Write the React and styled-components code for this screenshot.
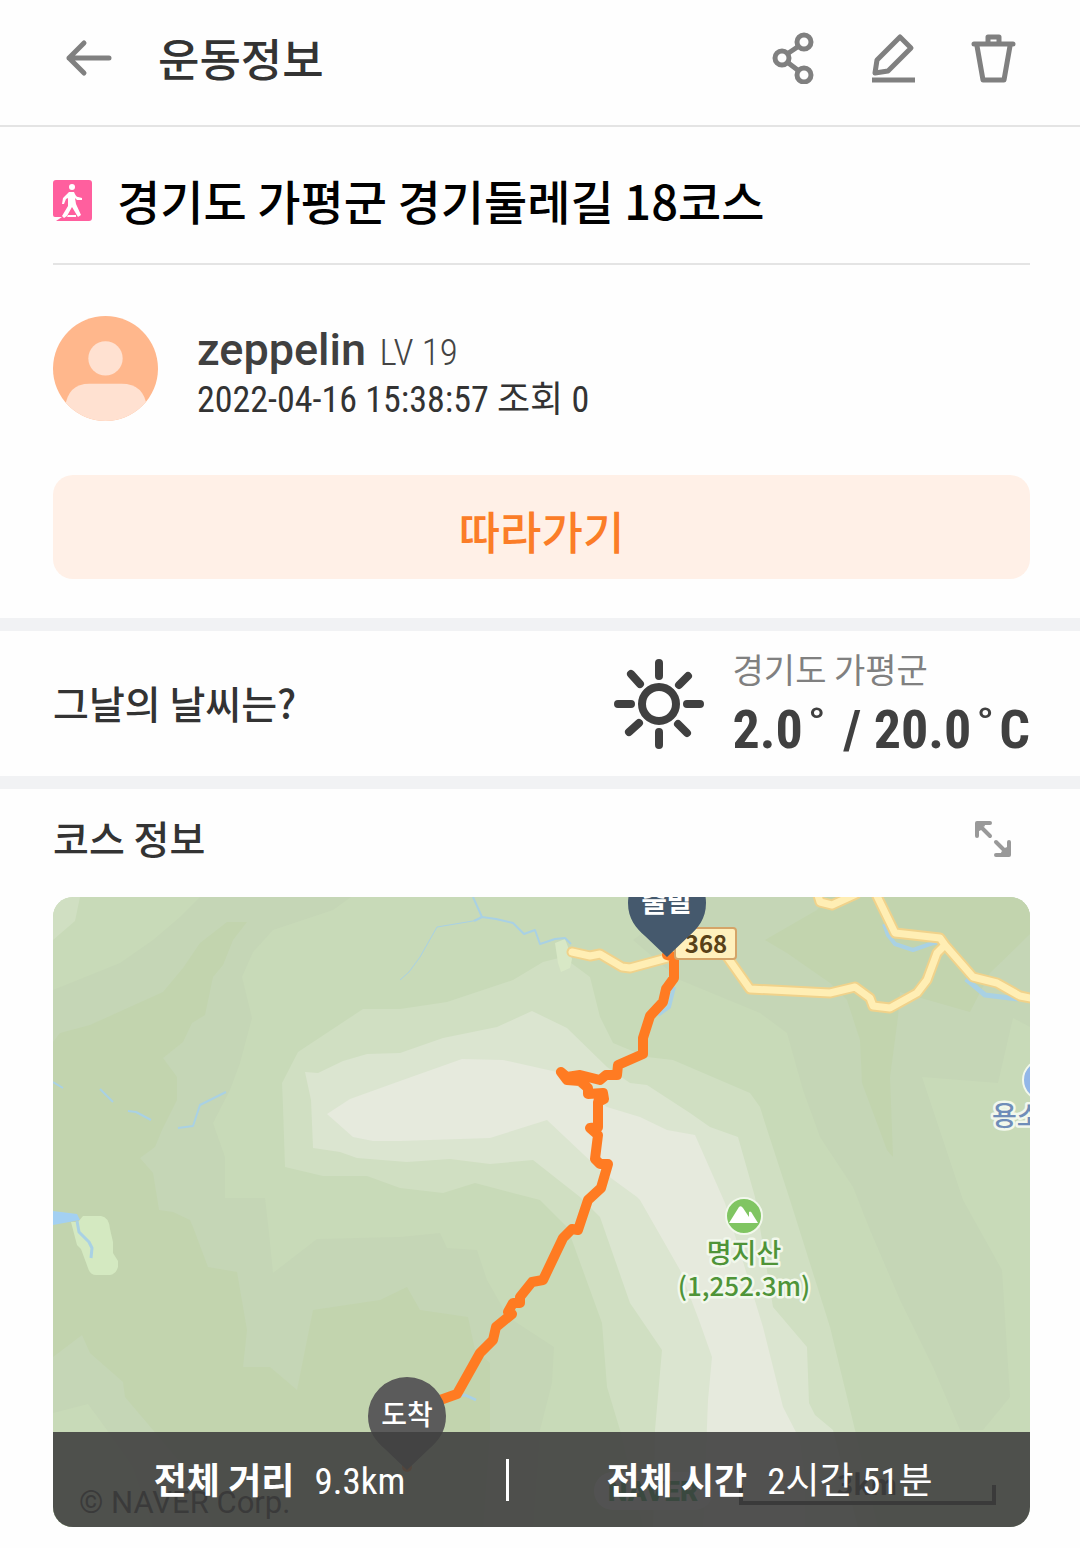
import styled, { createGlobalStyle } from "styled-components";

const GlobalStyle = createGlobalStyle`
  * {
    box-sizing: border-box;
  }

  body {
    margin: 0;
    background: #fefefe;
    color: #333333;
    font-family: "Roboto Condensed", "Liberation Sans Narrow", "Noto Sans CJK KR", sans-serif;
  }

  h1, h2, h3, p, dl, dt, dd {
    margin: 0;
    font-weight: 500;
  }
`;

const Page = styled.div`
  min-height: 100vh;
  padding-bottom: 21px;
`;

const Header = styled.header`
  display: flex;
  align-items: center;
  padding: 32px 60px 41px 64px;
  border-bottom: 2px solid #e4e4e4;
`;

const HeaderTitle = styled.h1`
  flex: 1;
  margin-left: 42px;
  font-family: "Noto Sans CJK KR", sans-serif;
  font-size: 45px;
  line-height: 52px;
`;

const Actions = styled.div`
  display: flex;
  gap: 48px;
`;

const IconButton = styled.button`
  display: flex;
  padding: 0;
  border: none;
  background: none;
  color: ${(props) => props.$color || "#808080"};
  cursor: pointer;
`;

const LineIcon = styled.svg`
  display: block;
  fill: none;
  stroke: currentColor;
  stroke-linejoin: round;
`;

const Summary = styled.section`
  padding: 0 50px 39px 53px;
`;

const TitleRow = styled.div`
  display: flex;
  align-items: center;
  gap: 25px;
  padding: 45px 0 35px;
  border-bottom: 2px solid #e4e4e4;
`;

const CourseTitle = styled.h2`
  color: #000000;
  font-family: "Noto Sans CJK KR", sans-serif;
  font-size: 47px;
  line-height: 56px;
`;

const UserRow = styled.div`
  display: flex;
  align-items: center;
  gap: 39px;
  height: 105px;
  margin: 51px 0 54px;
`;

const UserText = styled.div`
  padding-top: 8px;
`;

const UserName = styled.p`
  font-size: 45px;
  line-height: 52px;
  color: #404040;

  strong {
    font-family: "Roboto", sans-serif;
    font-size: 45px;
    font-weight: 500;
  }

  span {
    margin-left: 3px;
    font-size: 37px;
    font-weight: 300;
    color: #444444;
  }
`;

const UserMeta = styled.p`
  font-size: 36px;
  font-weight: 400;
  line-height: 42px;
`;

const FollowButton = styled.button`
  display: block;
  width: 100%;
  height: 104px;
  padding: 6px 0 0;
  border: none;
  border-radius: 20px;
  background: #fff0e7;
  color: #fb7d28;
  font-family: "Noto Sans CJK KR", sans-serif;
  font-size: 45px;
  font-weight: 500;
  cursor: pointer;
`;

const Weather = styled.section`
  display: flex;
  align-items: center;
  height: 171px;
  padding: 0 50px 0 53px;
  border: solid #f1f2f4;
  border-width: 13px 0;
`;

const SectionTitle = styled.h3`
  flex: 1;
  padding-bottom: 4px;
  font-family: "Noto Sans CJK KR", sans-serif;
  font-size: 39px;
  line-height: 52px;
`;

const Forecast = styled.div`
  display: flex;
  flex-direction: column;
  gap: 4px;
  margin-left: 29px;
  padding-bottom: 2px;
`;

const Place = styled.p`
  font-family: "Noto Sans CJK KR", sans-serif;
  font-size: 34px;
  font-weight: 400;
  line-height: 50px;
  color: #808080;
`;

const Temperature = styled.p`
  font-size: 54px;
  font-weight: 700;
  line-height: 64px;
  color: #404040;
`;

const Degree = styled.span`
  margin: 0 5px;
`;

const CourseHeader = styled.div`
  display: flex;
  align-items: center;
  padding: 22px 68px 30px 53px;
`;

const MapCard = styled.section`
  position: relative;
  margin: 0 50px 0 53px;
  border-radius: 20px;
  overflow: hidden;
`;

const MapDrawing = styled.svg`
  display: block;
  width: 100%;
  font-family: "Noto Sans CJK KR", sans-serif;
`;

const Totals = styled.div`
  position: absolute;
  inset: auto 0 0;
  display: flex;
  align-items: center;
  height: 95px;
  background: rgba(64, 64, 64, 0.9);
  color: #ffffff;
`;

const Total = styled.dl`
  display: flex;
  flex: ${(props) => props.$grow};
  justify-content: center;
  align-items: center;
  gap: 20px;
  padding-top: 4px;
  line-height: 44px;

  dt {
    font-size: 36px;
    font-weight: 700;
  }

  dd {
    font-size: 37px;
    font-weight: 400;
  }
`;

const Divider = styled.span`
  width: 3px;
  height: 42px;
  background: #ffffff;
`;

const contours = [
  // lower slopes
  ["#c5d6b6", "147,0 298,0 280,13 220,33 200,55 189,80 199,121 187,166 177,193 160,226 172,260 172,301 212,301 216,336 220,376 264,342 347,340 387,336 394,351 424,353 434,383 455,420 501,450 499,486 487,533 480,630 0,630 0,93 67,66 100,43 127,20"],
  ["#c2d4ae", "0,145 7,136 37,128 110,95 130,71 147,46 174,25 194,25 180,43 170,68 160,80 152,118 139,126 130,145 110,161 124,180 124,203 109,233 102,250 87,261 100,276 106,313 120,315 137,323 140,330 155,370 184,375 194,433 190,470 217,470 244,493 260,413 327,403 354,390 367,413 415,420 422,453 437,466 437,533 430,630 0,630"],
  ["#c5d6b6", "0,460 29,438 37,456 70,485 72,500 100,533 140,580 160,630 0,630"],
  ["#c8dab8", "0,516 35,507 54,533 80,570 100,630 0,630"],
  ["#d0dfc2", "0,0 27,0 22,24 0,43"],
  ["#c5d6b6", "640,0 580,43 627,83 707,116 734,136 750,193 767,240 800,290 817,333 847,403 880,470 907,533 930,533 957,500 949,373 910,303 869,180 945,186 960,121 977,130 977,0"],
  ["#c2d4ae", "712,43 764,13 774,0 977,0 977,37 937,76 917,115 847,95 845,120 837,180 840,260 834,253 809,186 807,143 794,103 777,86 734,56"],
  // ridge
  ["#d0dfc2", "229,186 245,155 310,112 347,112 394,105 460,83 490,65 510,60 537,80 547,120 560,146 594,160 620,163 697,196 707,210 712,226 737,303 777,430 802,533 825,630 590,630 567,533 554,490 549,426 520,346 514,330 487,303 422,286 390,296 347,291 314,279 270,279 232,270 230,210"],
  ["#dbe5d0", "252,175 265,176 290,164 314,157 347,156 390,141 444,130 479,114 514,131 554,170 577,186 594,188 637,216 657,230 685,240 702,300 720,410 754,450 756,506 762,518 780,533 805,630 600,630 602,533 609,453 577,406 547,320 527,300 480,263 437,267 397,262 354,265 304,261 287,255 260,251 258,203"],
  ["#e6eadd", "274,217 297,202 347,184 409,162 450,163 504,175 554,210 587,220 614,233 642,238 672,306 710,430 730,510 747,543 752,580 752,630 650,630 655,503 659,460 647,426 627,373 587,303 584,300 547,273 494,223 437,241 347,244 320,244 300,240"],
];

const streams = [
  [2, "420,0 429,20 421,24 M429,20 443,22 460,26 471,37 482,33 487,47 502,42 512,41 518,47"],
  [1, "429,20 420,24 384,30 367,60 356,75 347,83"],
  [2, "0,185 10,191 M47,192 60,205 M75,214 83,215 98,223 M125,231 140,229 147,208 173,195"],
  [3, "24,324 26,335 36,345 39,351 38,361"],
  [3, "390,501 412,498 423,503"],
  [4, "831,27 835,38 842,47 860,53 877,47 885,45"],
  [5, "913,82 932,98 965,102"],
  [4, "621,90 616,110 605,118"],
];

const roads = [
  "519,55 537,59 547,57 569,70 577,71 614,61 640,52 670,54 697,92 777,96 802,90 817,101 820,109 837,111 864,96 874,83 884,56 891,49",
  "822,-5 842,36 887,41 892,48 920,80 944,86 967,99 982,102",
  "764,-5 767,5 779,8 803,-3",
];

const route =
  "614,58 621,60 621,81 613,92 610,105 597,119 590,141 590,157 565,168 564,178 553,178 547,183 527,178 514,180 508,175 514,183 527,184 535,191 535,197 550,196 551,202 545,205 545,230 537,231 545,238 542,262 547,267 555,267 548,291 535,303 525,333 519,332 510,341 490,383 479,385 467,400 467,406 460,406 455,415 459,417 443,430 440,443 427,456 404,497 390,502 370,510";

const toPath = (points) => "M" + points;

const BackIcon = () => (
  <LineIcon width="52" height="52" strokeWidth="5" strokeLinecap="round">
    <path d="M20 11 5 26 20 41M5 26H45" />
  </LineIcon>
);

const ShareIcon = () => (
  <LineIcon width="52" height="52" strokeWidth="5">
    <circle cx="14" cy="26" r="7" />
    <circle cx="36" cy="10" r="7" />
    <circle cx="36" cy="43" r="7" />
    <path d="M19 22 31 14M19 30 31 39" />
  </LineIcon>
);

const EditIcon = () => (
  <LineIcon width="52" height="52" strokeWidth="5">
    <path d="M32 5 43 16 20 39 7 41 9 28ZM4 48H47" />
  </LineIcon>
);

const TrashIcon = () => (
  <LineIcon width="52" height="52" strokeWidth="5" strokeLinecap="round">
    <path d="M6 12H45M9 14 15 48H36L42 14M20 12V5H31V12" />
  </LineIcon>
);

const ExpandIcon = () => (
  <LineIcon width="38" height="38" strokeWidth="4" strokeLinecap="round">
    <path d="M3 16V3H16M5 5 16 16M35 22V35H22M33 33 22 22M5 9V5H9M33 29V33H29" />
  </LineIcon>
);

const SunIcon = () => (
  <LineIcon width="90" height="90" strokeWidth="8" strokeLinecap="round" color="#404040">
    <circle cx="45" cy="45" r="17" />
    <path d="M45 4V17M45 73V86M4 45H17M73 45H86M17 15 26 25M74 17 65 26M15 73 25 64M73 74 64 65" />
  </LineIcon>
);

const WalkIcon = () => (
  <svg width="39" height="41" viewBox="0 0 39 41">
    <path fill="#ff5f9e" d="M3 0H36Q39 0 39 3V38Q39 41 36 41H3L9 37H2Q0 37 0 35V3Q0 0 3 0Z" />
    <circle cx="19" cy="7" r="3" fill="#ffffff" />
    <path
      fill="#ffffff"
      d="M16 12H21Q23 17 25 17L29 18V20L24 20 22 18 23 24 28 35 25 37 19 27 14 36 11 38 9 36 15 26V18L13 19 11 24H9L10 18Z"
    />
    <path fill="#ffffff" d="M15 35H23V37H14Z" />
  </svg>
);

const Avatar = () => (
  <svg width="105" height="105" viewBox="0 0 104 104" role="img" aria-label="zeppelin">
    <clipPath id="avatar">
      <circle cx="52" cy="52" r="52" />
    </clipPath>
    <g clipPath="url(#avatar)">
      <rect width="105" height="105" fill="#ffb78c" />
      <circle cx="52" cy="42" r="17" fill="#ffe1d1" />
      <path fill="#ffe1d1" d="M12 105V90Q15 67 36 67H68Q90 67 93 90V105Z" />
    </g>
  </svg>
);

const Pin = ({ x, y, color, label, weight }) => (
  <g transform={`translate(${x} ${y})`}>
    <path fill={color} d="M-39 0A39 39 0 0 1 39 0C39 16 31 25 22 33L0 54-22 33C-31 25-39 16-39 0Z" />
    <text y="9" textAnchor="middle" fontSize="28" fontWeight={weight} fill="#ffffff">
      {label}
    </text>
  </g>
);

const CourseMap = () => (
  <MapDrawing viewBox="0 0 977 630">
    <rect width="977" height="630" fill="#c8dab8" />
    {contours.map(([color, points]) => (
      <polygon key={points} points={points} fill={color} />
    ))}
    <path fill="#d4e9c1" d="M30 319H48Q56 320 57 332L60 345V356L65 364V370Q63 377 57 378H43Q37 378 35 371L28 352 24 348 18 325H25Z" />
    <path fill="#d8e8c6" d="M502 46 512 42 515 50 519 62 517 71 508 75 505 66Z" />
    <path fill="#a3d0f2" d="M0 314 24 317 27 323 0 328Z" />
    <g fill="none" stroke="#a9d1e4" strokeLinejoin="round">
      {streams.map(([width, points]) => (
        <path key={points} d={toPath(points)} strokeWidth={width} />
      ))}
    </g>
    <g fill="none" strokeLinejoin="round" strokeLinecap="round">
      {roads.map((points) => (
        <path key={points} d={toPath(points)} stroke="#f0d28b" strokeWidth="11" />
      ))}
      {roads.map((points) => (
        <path key={points} d={toPath(points)} stroke="#ffeeb4" strokeWidth="7" />
      ))}
      <path d={toPath(route)} stroke="#ff7b22" strokeWidth="10" />
    </g>
    <circle cx="354" cy="570" r="5" fill="#ff7b22" />

    <rect x="622" y="31" width="61" height="31" rx="3" fill="#fff0bd" stroke="#d5a468" strokeWidth="2" />
    <text x="653" y="56" textAnchor="middle" fontSize="24" fontWeight="700" fill="#594118">
      368
    </text>
    <Pin x={614} y={6} color="#45596d" label="출발" weight={700} />
    <Pin x={354} y={519} color="#5b5b5b" label="도착" weight={500} />

    <circle cx="691" cy="319" r="18" fill="#80c562" stroke="#f2f8ec" strokeWidth="2" />
    <path fill="#ffffff" d="M676 326 686 310Q688 308 690 311L696 320 696 315Q698 313 700 318L705 326Z" />
    <g textAnchor="middle" fontWeight="500" stroke="#f2f8ec" strokeWidth="5" strokeLinejoin="round" paintOrder="stroke">
      <text x="691" y="366" fontSize="27" fill="#4f9438">명지산</text>
      <text x="691" y="399" fontSize="26" fill="#4f9438">(1,252.3m)</text>
    </g>

    <circle cx="990" cy="183" r="20" fill="#93b7e8" stroke="#f2f8ec" strokeWidth="2" />
    <text x="939" y="229" fontSize="27" fontWeight="500" fill="#6f8db8" stroke="#f2f8ec" strokeWidth="5" strokeLinejoin="round" paintOrder="stroke">
      용소
    </text>

    {/* map credits, dimmed by the totals bar */}
    <text x="26" y="616" fontFamily="Roboto, sans-serif" fontSize="31" fill="#000000">
      © NAVER Corp.
    </text>
    <rect x="541" y="575" width="119" height="38" rx="19" fill="#f6f6f6" />
    <text x="600" y="604" textAnchor="middle" fontFamily="Roboto, sans-serif" fontSize="28" fontWeight="900" fill="#008a3a">
      NAVER
    </text>
    <path fill="none" stroke="#000000" strokeWidth="4" d="M688 588V606H941V588" />
    <text x="814" y="598" textAnchor="middle" fontSize="28" fontWeight="700" fill="#000000">
      3km
    </text>
  </MapDrawing>
);

const App = () => {
  return (
    <Page>
      <GlobalStyle />
      <Header>
        <IconButton aria-label="뒤로">
          <BackIcon />
        </IconButton>
        <HeaderTitle>운동정보</HeaderTitle>
        <Actions>
          <IconButton aria-label="공유">
            <ShareIcon />
          </IconButton>
          <IconButton aria-label="수정">
            <EditIcon />
          </IconButton>
          <IconButton aria-label="삭제">
            <TrashIcon />
          </IconButton>
        </Actions>
      </Header>
      <Summary>
        <TitleRow>
          <WalkIcon />
          <CourseTitle>경기도 가평군 경기둘레길 18코스</CourseTitle>
        </TitleRow>
        <UserRow>
          <Avatar />
          <UserText>
            <UserName>
              <strong>zeppelin</strong> <span>LV 19</span>
            </UserName>
            <UserMeta>2022-04-16 15:38:57 조회 0</UserMeta>
          </UserText>
        </UserRow>
        <FollowButton>따라가기</FollowButton>
      </Summary>
      <Weather>
        <SectionTitle>그날의 날씨는?</SectionTitle>
        <SunIcon />
        <Forecast>
          <Place>경기도 가평군</Place>
          <Temperature>
            2.0<Degree>˚</Degree> / 20.0<Degree>˚</Degree>C
          </Temperature>
        </Forecast>
      </Weather>
      <CourseHeader>
        <SectionTitle>코스 정보</SectionTitle>
        <IconButton aria-label="지도 확대" $color="#999999">
          <ExpandIcon />
        </IconButton>
      </CourseHeader>
      <MapCard>
        <CourseMap />
        <Totals>
          <Total $grow={453}>
            <dt>전체 거리</dt>
            <dd>9.3km</dd>
          </Total>
          <Divider />
          <Total $grow={521}>
            <dt>전체 시간</dt>
            <dd>2시간 51분</dd>
          </Total>
        </Totals>
      </MapCard>
    </Page>
  );
};

export default App;
